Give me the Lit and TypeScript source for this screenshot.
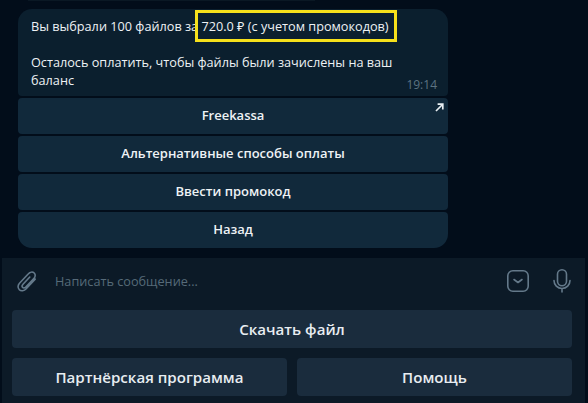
import { LitElement, html, css, svg } from "lit";
import { customElement } from "lit/decorators.js";

@customElement("app-root")
export class AppRoot extends LitElement {
  static styles = css`
    :host {
      display: block;
      width: 588px;
      height: 403px;
      overflow: hidden;
      position: relative;
      background: #020d1a;
      font-family: "Open Sans", "Noto Sans", sans-serif;
      color: #eef2f5;
    }
    .prev {
      height: 1px;
      width: 287px;
      margin: 0 0 8px 10px;
      background: #0a1824;
    }
    .chat {
      height: 258px;
      box-sizing: border-box;
      padding: 0 140px 0 18px;
      display: flex;
      flex-direction: column;
    }
    .stack { display: flex; flex-direction: column; gap: 2px; }
    .bubble {
      height: 87px;
      box-sizing: border-box;
      background: #0b1f2e;
      border-radius: 14px 14px 4px 4px;
      padding: 8px 13px;
      font-size: 12.7px;
      line-height: 18px;
      position: relative;
    }
    .bubble p { margin: 0 0 18px; }
    .bubble p:last-of-type { margin: 0; }
    .time {
      position: absolute;
      right: 11px;
      bottom: 3px;
      font-size: 12px;
      line-height: 16px;
      color: #5d7382;
    }
    .ib {
      height: 36px;
      padding-bottom: 2px;
      box-sizing: border-box;
      background: #11293b;
      border-radius: 4px;
      display: flex;
      align-items: center;
      justify-content: center;
      font-size: 13px;
      font-weight: 600;
      position: relative;
      flex: none;
    }
    .ib.last { border-radius: 4px 4px 14px 14px; }
    .arrow { position: absolute; top: 5px; right: 4px; width: 9px; height: 9px; }
    .composer {
      height: 145px;
      margin: 0 3px 0 2px;
      background: #0c1a27;
      box-sizing: border-box;
      padding: 0 13px 7px 10px;
      display: flex;
      flex-direction: column;
    }
    .input {
      height: 46px;
      margin-bottom: 6px;
      display: flex;
      align-items: center;
      color: #566a78;
      font-size: 12.7px;
      flex: none;
    }
    .input .ph { flex: 1; margin-left: 18px; }
    .input svg { display: block; flex: none; fill: none; stroke: #64798a; }
    .clip { margin-left: 5px; }
    .smile { margin-right: 24px; }
    .mic { margin-right: 1px; }
    .kb { display: flex; flex-direction: column; gap: 10px; }
    .kb-row { display: flex; gap: 10px; }
    .kb-btn {
      flex: 1 1 0;
      height: 38px;
      background: #1a2c3d;
      border-radius: 4px;
      display: flex;
      align-items: center;
      justify-content: center;
      font-size: 15.1px;
      font-weight: 600;
      color: #e8edf1;
    }
    .mark {
      position: absolute;
      left: 195px;
      top: 10px;
      width: 202px;
      height: 32px;
      box-sizing: border-box;
      border: 3px solid #f6e01b;
    }
  `;

  render() {
    return html`
      <div class="chat">
        <div class="prev"></div>
        <div class="stack">
          <div class="bubble">
            <p>Вы выбрали 100 файлов за 720.0 ₽ (с учетом промокодов)</p>
            <p>Осталось оплатить, чтобы файлы были зачислены на ваш баланс</p>
            <span class="time">19:14</span>
          </div>
          <div class="ib">Freekassa
            <svg class="arrow" viewBox="0 0 9 9">
              <path d="M1 8 L7 2 M2.6 1.2 H7.8 V6.4" fill="none" stroke="#e8eef2" stroke-width="1.7"/>
            </svg>
          </div>
          <div class="ib">Альтернативные способы оплаты</div>
          <div class="ib">Ввести промокод</div>
          <div class="ib last">Назад</div>
        </div>
      </div>
      <div class="composer">
        <div class="input">
          <svg class="clip" width="20" height="21" viewBox="0 0 20 21" stroke-width="1.6" stroke-linecap="round">
            ${svg`<path d="M18.2 8.2 L9.2 17.8 C7.2 20 4 20.4 2.3 18.7 C0.4 16.9 0.8 14 2.7 12 L11.4 2.8 C13 1 15.6 0.6 17.2 2 C18.8 3.5 18.4 5.9 16.8 7.6 L8.8 16 C7.8 17.1 6.4 17.2 5.6 16.4 C4.8 15.6 5 14.3 6 13.2 L12.8 6"/>`}
          </svg>
          <span class="ph">Написать сообщение...</span>
          <svg class="smile" width="22" height="22" viewBox="0 0 22 22" stroke-width="1.6" stroke-linecap="round" stroke-linejoin="round">
            <rect x="0.8" y="0.8" width="20.4" height="20.4" rx="5"/>
            <path d="M7 9.5 L11 12.5 L15 9.5"/>
          </svg>
          <svg class="mic" width="18" height="24" viewBox="0 0 18 24" stroke-width="1.6" stroke-linecap="round">
            <rect x="4.5" y="0.8" width="9" height="16" rx="4.5"/>
            <path d="M1 11.5 C1 16 4.5 19.5 9 19.5 C13.5 19.5 17 16 17 11.5 M9 19.5 V23"/>
          </svg>
        </div>
        <div class="kb">
          <div class="kb-row"><div class="kb-btn">Скачать файл</div></div>
          <div class="kb-row"><div class="kb-btn">Партнёрская программа</div><div class="kb-btn">Помощь</div></div>
        </div>
      </div>
      <div class="mark"></div>
    `;
  }
}
